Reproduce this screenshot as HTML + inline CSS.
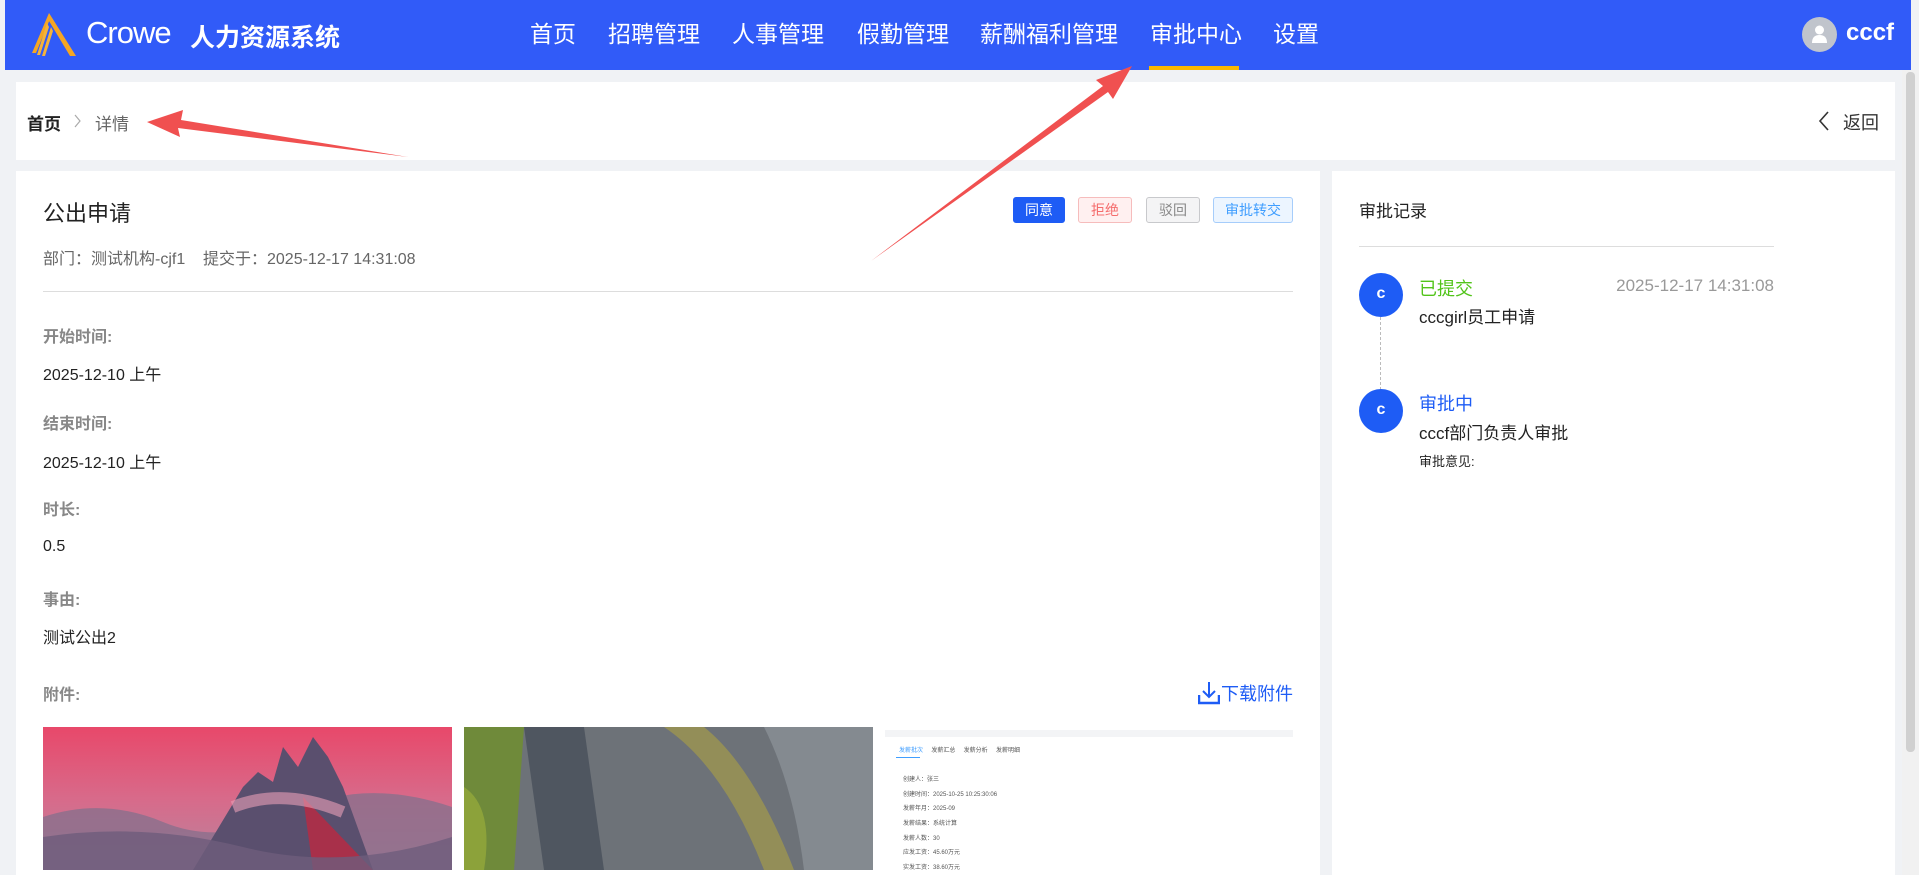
<!DOCTYPE html>
<html><head><meta charset="utf-8">
<style>
*{margin:0;padding:0;box-sizing:border-box}
body{width:1919px;height:875px;overflow:hidden;background:#f0f2f5;font-family:"Liberation Sans","Noto Sans CJK SC",sans-serif;position:relative;color:#222}
.hdr{position:absolute;left:5px;top:0;width:1906px;height:70px;background:#315bf8}
.abs{position:absolute;white-space:nowrap}
.nav{position:absolute;top:19px;color:#fff;font-size:23px;line-height:30px}
.card{position:absolute;background:#fff}
.lbl{position:absolute;left:43px;font-size:16px;color:#888;font-weight:bold}
.val{position:absolute;left:43px;font-size:16px;color:#222}
.btn{position:absolute;top:197px;height:26px;font-size:14px;line-height:24px;text-align:center;border-radius:3px;border:1px solid}
.circ{position:absolute;width:44px;height:44px;border-radius:50%;background:#1e5cf5;color:#fff;font-weight:bold;font-size:16px;text-align:center;line-height:42px}
.tiny{position:absolute;font-size:6px;color:#555;left:18px}
</style></head><body>
<div class="hdr"></div>
<svg class="abs" style="left:30px;top:13px" width="46" height="43" viewBox="0 0 46 43">
<path d="M19 0 L46 43 L40 43 L19 8 Z" fill="#f5a623"/>
<path d="M19 0 L2 40 L6 40 L20 6Z" fill="#f5a623"/>
<path d="M17 10 L7 42 L10 42 L19 14Z" fill="#f5b33a"/>
<path d="M21 14 L12 43 L15 43 L23 18Z" fill="#f5b33a"/>
</svg>
<div class="abs" style="left:86px;top:15px;color:#fff;font-size:31px;letter-spacing:-1px">Crowe</div>
<div class="abs" style="left:190px;top:18px;color:#fff;font-size:25px;font-weight:bold">人力资源系统</div>
<div class="nav" style="left:530px">首页</div>
<div class="nav" style="left:608px">招聘管理</div>
<div class="nav" style="left:732px">人事管理</div>
<div class="nav" style="left:857px">假勤管理</div>
<div class="nav" style="left:980px">薪酬福利管理</div>
<div class="nav" style="left:1150px">审批中心</div>
<div class="nav" style="left:1273px">设置</div>
<div class="abs" style="left:1149px;top:66px;width:90px;height:4px;background:#fbb800"></div>
<div class="abs" style="left:1802px;top:17px;width:35px;height:35px;border-radius:50%;background:#c0c4cc"></div>
<svg class="abs" style="left:1811px;top:24px" width="17" height="20" viewBox="0 0 17 20"><circle cx="8.5" cy="6" r="4.5" fill="#fff"/><path d="M1 19 Q1 11 8.5 11 Q16 11 16 19Z" fill="#fff"/></svg>
<div class="abs" style="left:1846px;top:19px;color:#fff;font-size:24px;font-weight:bold">cccf</div>

<div class="card" style="left:16px;top:82px;width:1879px;height:78px"></div>
<div class="abs" style="left:27px;top:110px;font-size:17px;font-weight:bold;color:#222">首页</div>
<svg class="abs" style="left:74px;top:114px" width="8" height="14" viewBox="0 0 8 14"><path d="M1 1 L6 7 L1 13" stroke="#aaa" stroke-width="1.2" fill="none"/></svg>
<div class="abs" style="left:95px;top:110px;font-size:17px;color:#666">详情</div>
<svg class="abs" style="left:1818px;top:111px" width="12" height="20" viewBox="0 0 12 20"><path d="M10 1 L2 10 L10 19" stroke="#333" stroke-width="1.6" fill="none"/></svg>
<div class="abs" style="left:1843px;top:109px;font-size:18px;color:#333">返回</div>

<div class="card" style="left:16px;top:171px;width:1304px;height:704px"></div>
<div class="card" style="left:1332px;top:171px;width:563px;height:704px"></div>

<div class="abs" style="left:43px;top:196px;font-size:22px;color:#222">公出申请</div>
<div class="abs" style="left:43px;top:245px;font-size:16px;color:#666">部门：测试机构-cjf1&nbsp;&nbsp;&nbsp;&nbsp;提交于：2025-12-17 14:31:08</div>
<div class="abs" style="left:43px;top:291px;width:1250px;height:1px;background:#ddd"></div>
<div class="btn" style="left:1013px;width:52px;background:#1e5cf5;border-color:#1e5cf5;color:#fff">同意</div>
<div class="btn" style="left:1078px;width:54px;background:#fff0f0;border-color:#f6bcbc;color:#f56c6c">拒绝</div>
<div class="btn" style="left:1146px;width:54px;background:#f4f4f5;border-color:#c8c9cc;color:#888">驳回</div>
<div class="btn" style="left:1213px;width:80px;background:#ecf5ff;border-color:#a6cdfb;color:#409eff">审批转交</div>

<div class="lbl" style="top:323px">开始时间:</div>
<div class="val" style="top:361px">2025-12-10 上午</div>
<div class="lbl" style="top:410px">结束时间:</div>
<div class="val" style="top:449px">2025-12-10 上午</div>
<div class="lbl" style="top:496px">时长:</div>
<div class="val" style="top:538px">0.5</div>
<div class="lbl" style="top:586px">事由:</div>
<div class="val" style="top:624px">测试公出2</div>
<div class="lbl" style="top:681px">附件:</div>
<svg class="abs" style="left:1198px;top:681px" width="22" height="24" viewBox="0 0 22 24"><path d="M11 1 V16 M5 10 L11 16 L17 10" stroke="#1e5cf5" stroke-width="2" fill="none"/><path d="M1 14 V22 H21 V14" stroke="#1e5cf5" stroke-width="2.5" fill="none"/></svg>
<div class="abs" style="left:1221px;top:680px;font-size:18px;color:#1e5cf5">下载附件</div>

<svg class="abs" style="left:43px;top:727px" width="409" height="143" viewBox="0 0 409 143">
<defs><linearGradient id="sk" x1="0" y1="0" x2="0" y2="1"><stop offset="0" stop-color="#e8486a"/><stop offset=".5" stop-color="#d86a8a"/><stop offset="1" stop-color="#b7859e"/></linearGradient></defs>
<rect width="409" height="143" fill="url(#sk)"/>
<path d="M0 90 Q60 70 120 95 T250 85 T409 80 V143 H0Z" fill="#8a6f8c" opacity=".8"/>
<path d="M150 143 L200 60 L215 45 L230 55 L240 20 L255 40 L270 10 L285 30 L300 60 L330 143Z" fill="#5a4f6e"/>
<path d="M260 70 L330 143 L270 143Z" fill="#a8304a"/>
<path d="M0 110 Q100 95 200 120 T409 110 V143 H0Z" fill="#6e5c7c" opacity=".8"/>
<path d="M190 80 Q240 60 300 85" stroke="#e9a0b8" stroke-width="12" fill="none" opacity=".6"/>
</svg>
<svg class="abs" style="left:464px;top:727px" width="409" height="143" viewBox="0 0 409 143">
<rect width="409" height="143" fill="#6d7278"/>
<path d="M0 0 H60 L50 143 H0Z" fill="#6f8a3a"/>
<path d="M60 0 L80 143 H140 L120 0Z" fill="#4f5660"/>
<path d="M200 0 Q260 40 300 143 H330 Q290 40 240 0Z" fill="#a49a4a" opacity=".7"/>
<path d="M300 0 H409 V143 H340 Q330 60 300 0Z" fill="#848a90"/>
<path d="M0 60 Q30 80 20 143 H0Z" fill="#8ca23a"/>
</svg>
<div class="abs" style="left:885px;top:727px;width:408px;height:143px;background:#fff;overflow:hidden">
<div style="position:absolute;left:0;top:3px;width:408px;height:7px;background:#f3f4f6"></div>
<div style="position:absolute;left:14px;top:18px;font-size:6px;color:#409eff">发薪批次&nbsp;&nbsp;&nbsp;&nbsp;&nbsp;<span style="color:#555">发薪汇总&nbsp;&nbsp;&nbsp;&nbsp;&nbsp;发薪分析&nbsp;&nbsp;&nbsp;&nbsp;&nbsp;发薪明细</span></div>
<div style="position:absolute;left:11px;top:30px;width:24px;height:1px;background:#409eff"></div>
<div class="tiny" style="top:47px">创建人：张三</div>
<div class="tiny" style="top:62px">创建时间：2025-10-25 10:25:30:06</div>
<div class="tiny" style="top:76px">发薪年月：2025-09</div>
<div class="tiny" style="top:91px">发薪结果：系统计算</div>
<div class="tiny" style="top:106px">发薪人数：30</div>
<div class="tiny" style="top:120px">应发工资：45.60万元</div>
<div class="tiny" style="top:135px">实发工资：38.60万元</div>
</div>

<div class="abs" style="left:1359px;top:197px;font-size:17px;color:#222">审批记录</div>
<div class="abs" style="left:1359px;top:246px;width:415px;height:1px;background:#ddd"></div>
<div class="abs" style="left:1380px;top:317px;height:78px;border-left:1px dashed #bbb"></div>
<div class="circ" style="left:1359px;top:273px">c</div>
<div class="circ" style="left:1359px;top:389px">c</div>
<div class="abs" style="left:1419px;top:275px;font-size:18px;color:#52c41a">已提交</div>
<div class="abs" style="left:1606px;top:276px;font-size:17px;color:#999;width:168px;text-align:right">2025-12-17 14:31:08</div>
<div class="abs" style="left:1419px;top:303px;font-size:17px;color:#222">cccgirl员工申请</div>
<div class="abs" style="left:1419px;top:390px;font-size:18px;color:#1e5cf5">审批中</div>
<div class="abs" style="left:1419px;top:419px;font-size:17px;color:#222">cccf部门负责人审批</div>
<div class="abs" style="left:1419px;top:451px;font-size:13px;color:#222">审批意见:</div>

<div class="abs" style="left:1902px;top:70px;width:17px;height:805px;background:#f1f1f1"></div>
<div class="abs" style="left:1906px;top:72px;width:9px;height:680px;background:#d0d0d0;border-radius:4px"></div>

<svg class="abs" style="left:0;top:0" width="1919" height="875">
<path d="M408 157 L178 128 L180 137 L147 122 L183 110 L181 120 Z" fill="#f05050"/>
<path d="M871 261 L1103 86 L1096 80 L1132 66 L1113 99 L1108 92 Z" fill="#f05050"/>
</svg>
</body></html>
